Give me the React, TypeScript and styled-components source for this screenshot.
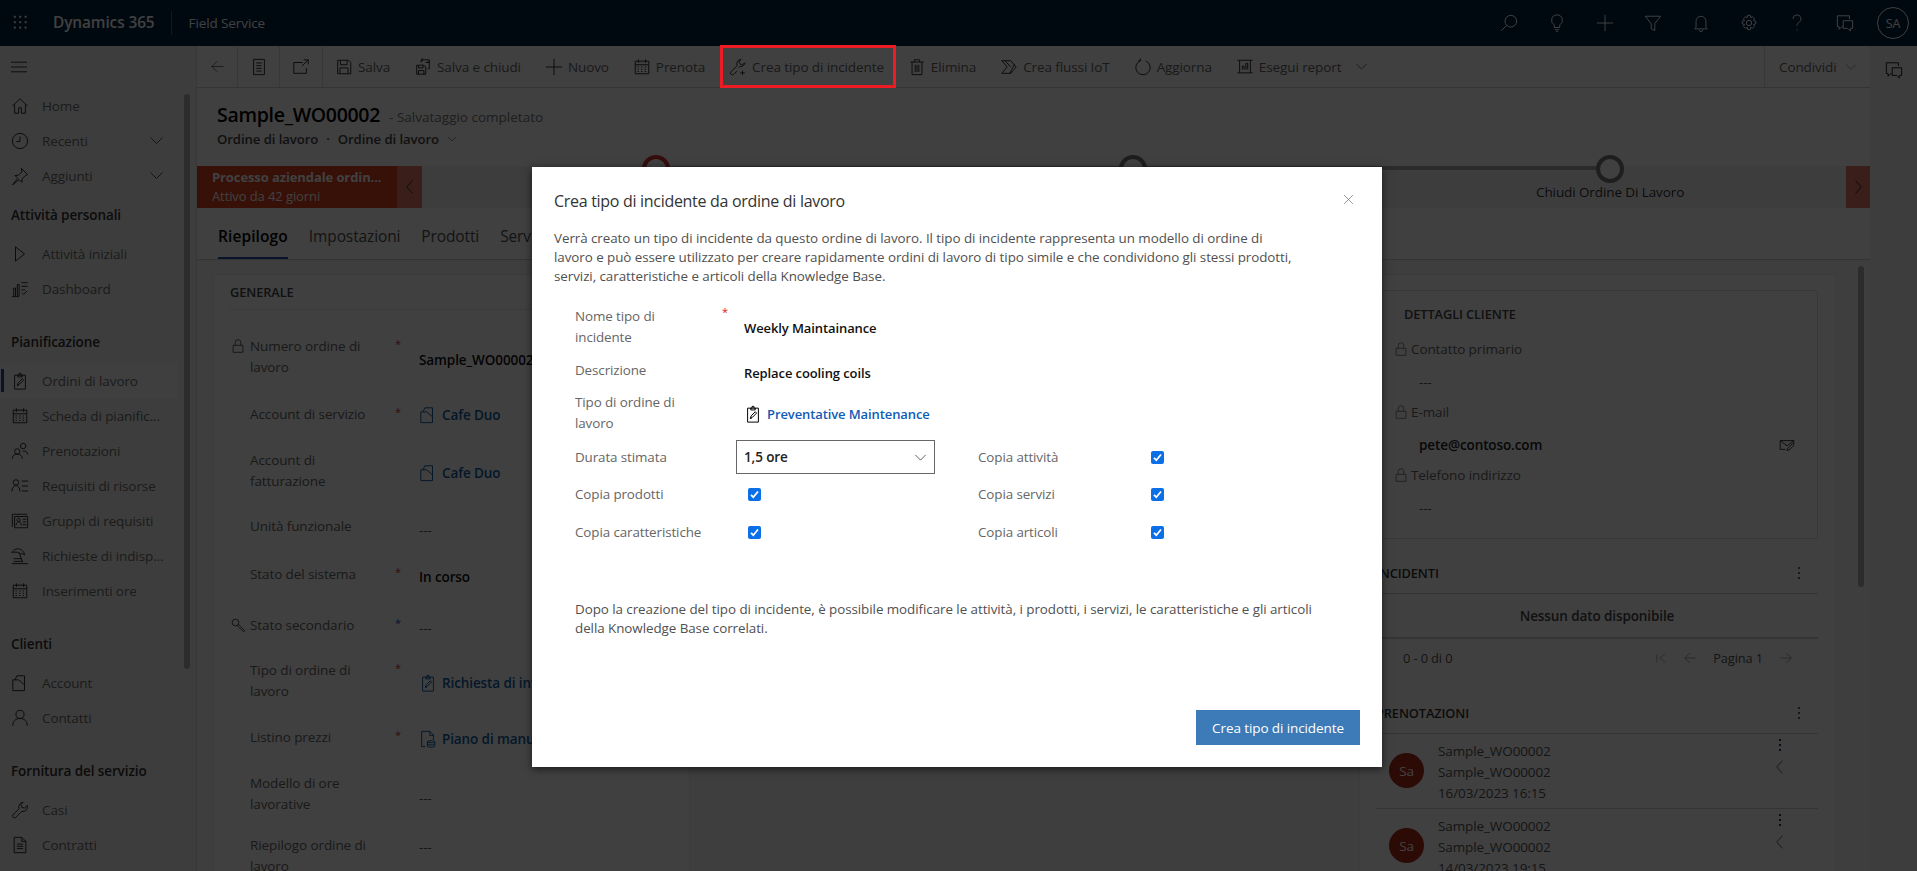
import React from 'react';
import styled, { createGlobalStyle } from 'styled-components';

const FONT = '"Open Sans", "Noto Sans", sans-serif';

const GlobalStyle = createGlobalStyle`
  html, body { margin: 0; padding: 0; height: 100%; overflow: hidden; background: #fff; }
  body { font-family: ${FONT}; font-size: 13.5px; letter-spacing: -0.1px; color: #323130; }
  * { box-sizing: border-box; }
`;

/* --- icons, thin outlines on a 20 unit grid --- */
const icons: Record<string, React.ReactNode> = {
  waffle: <g fill="currentColor" stroke="none">{[3, 9, 15].flatMap(y => [3, 9, 15].map(x => <rect key={`${x}-${y}`} x={x - 1} y={y - 1} width="2.2" height="2.2" />))}</g>,
  menu: <path d="M0 4h20M0 10h20M0 16h20" />,
  back: <path d="M18 10H2.5M9.5 3l-7 7 7 7" />,
  docList: <path d="M4 1.5h12v17H4zM7 5.5h6M7 8.5h6M7 11.5h6M7 14.5h6" />,
  openIn: <path d="M12 5H2v12h14v-6M11 9l7-7M13 2h5v5" />,
  save: <path d="M3 2.5h12l2.5 2.5v12.5h-14.5zM6 2.5v5h7.500v-5M5.500 17.500v-6.500h9v6.500" />,
  saveClose: <path d="M3 8h8l2 2v8H3zM5 8v3h5V8M5 18v-4h6v4M8 5V2h9v10h-2M8 2l2-1.500M8 2l2 1.500M17 5l-2-1.500M13 5h4" />,
  plus: <path d="M10 1v18M1 10h18" />,
  calendar: <path d="M2.500 3.500h15v14h-15zM2.500 7.500h15M6 1.500v4M14 1.500v4M5 10h1.500M9 10h1.500M13 10h1.500M5 12.500h1.500M9 12.500h1.500M13 12.500h1.500M5 15h1.500M9 15h1.500M13 15h1.500" />,
  wrenchPlus: <path d="M13.500 1.500a5 5 0 0 0-4.500 7L2 15.500a2.200 2.200 0 0 0 3 3l4-4M13 1.700l-2 3 2.500 3 3.500-1.500M17.800 5a5 5 0 0 1-5.800 4.500L10.500 11M15 14v5M12.500 16.500h5" />,
  trash: <path d="M2.500 4.500h15M7 4.500V2h6v2.500M4.500 4.500V18.500h11V4.500M8 7.500v8M10 7.500v8M12 7.500v8" />,
  flow: <path d="M2 3h10l6 7-6 7H2l6-7zM6 3.500l6 6.500M11 17l5-10" />,
  refresh: <path d="M7 3.200a8 8 0 1 0 6 0M7 3.200V.5M7 3.200H4.500" />,
  report: <path d="M4 2.500h12v14H4zM1.500 2.500H4M16 2.500h2.500M1.500 16.500H4M16 16.500h2.500M7 13V9h2v4M11 13V6h2v7" />,
  chevronDown: <path d="M2 6l8 8 8-8" />,
  chevronLeft: <path d="M13 2l-7 8 7 8" />,
  chevronRight: <path d="M7 2l7 8-7 8" />,
  search: <path d="M12 1.500a6.500 6.500 0 1 1 0 13 6.500 6.500 0 0 1 0-13zM7.500 12.500L1.500 18.500" />,
  bulb: <path d="M10 1a6 6 0 0 0-3 11.200V15h6v-2.800A6 6 0 0 0 10 1zM7.500 17.500h5M9 19.500h2" />,
  filter: <path d="M1.500 2.500h17L12 10.500v8l-4-2v-5.500z" />,
  bell: <path d="M4.500 15V8a5.500 5.500 0 0 1 11 0v7l1.500 1.500H3zM8 17.500a2 2 0 0 0 4 0" />,
  gear: <path d="M8.500 1.500h3l.5 2.500 2-.9 2.200 2.100-1.200 2.100 2.500.7v3l-2.500.6 1.200 2.200-2.200 2.100-2-1.100-.5 2.600h-3l-.5-2.600-2 1.100-2.200-2.100 1.200-2.200-2.500-.6v-3l2.500-.7-1.200-2.100 2.200-2.100 2 .9zM10 7a3 3 0 1 1 0 6 3 3 0 0 1 0-6z" />,
  question: <path d="M5.500 5.500a4.500 4.500 0 1 1 6.500 4c-1.500.8-2 1.500-2 3.500M10 17v1.500" />,
  chat: <path d="M15 5.500V2H1.500v12h2v3l3-3h1M8 7.500h10.500V16h-2.500v3l-3-3H8z" />,
  home: <path d="M1.500 10L10 2l8.500 8M4 8v10h4.500v-6h3v6H16V8" />,
  clock: <path d="M10 1.500a8.500 8.500 0 1 1 0 17 8.500 8.500 0 0 1 0-17zM10 5v5.500h-4" />,
  pin: <path d="M11.500 1.500l7 7-2.500 1-3.500 3.500-.5 4-3-3-7.500 6 6-7.500-3-3 4-.5L12 5.500z" />,
  play: <path d="M5 2l10 8-10 8z" />,
  dashboard: <path d="M1 18.500h8M3 18V9h2v9M7 18V5h2v13M11.500 3h7M11.500 7h7M11.500 11h4M12 14l2 2 4-4" />,
  clipboard: <path d="M4 3.500h12v15.500H4zM7.500 3.500V5.500h5V3.500H11V1.500H9v2zM7 15l1-3 4.500-4.500 1.500 1.500-4.500 4.500zM7 15l1.500-.5" />,
  people: <path d="M13.500 1.500a3 3 0 1 1 0 6 3 3 0 0 1 0-6zM7 7.500a3 3 0 1 1 0 6 3 3 0 0 1 0-6zM1.500 18.500c0-3 2-5 5.500-5s5.500 2 5.500 5M13 10c3-.5 5.500 1.500 5.500 4" />,
  reqList: <path d="M5.500 3a3 3 0 1 1 0 6 3 3 0 0 1 0-6zM1 16c0-4 2-6.500 4.500-6.500S10 12 10 16M12 4.500h7M12 10h7M12 15.500h7" />,
  group: <path d="M1.500 2.500v14M1.500 2.500H18M4 5h14.500v12.500H4zM8.500 7a1.800 1.800 0 1 1 0 3.600 1.800 1.800 0 0 1 0-3.600zM5.500 15c0-2.500 1.300-4 3-4s3 1.500 3 4M13 8h4M13 11h4M13 14h4" />,
  beach: <path d="M1 6c2-4 7-5 10-3 2 1 4 3 4 6-2-2-4-2-5-1-1-2-4-3-9-2zM9 6l4 11M1 18.500h18M3 13h9M3 16h10" />,
  building: <path d="M2 6.500V18.500h13V12L8.500 6.500zM4.500 6.500L6.500 2H15V12" />,
  person: <path d="M10 1.500a4.500 4.500 0 1 1 0 9 4.500 4.500 0 0 1 0-9zM2 18.500c0-5 3-8 8-8s8 3 8 8" />,
  wrench: <path d="M13.500 1.500a5 5 0 0 0-4.500 7L2 15.500a2.200 2.200 0 0 0 3 3l7-7a5 5 0 0 0 6-6.500l-3 3-3-1-1-3z" />,
  contract: <path d="M3.500 1.500H12l4.500 4.500V18.500H3.500zM12 1.500V6h4.500M6.500 9h7M6.500 11.500h7M6.500 14h7" />,
  lock: <path d="M3 9h14v10H3zM6 9V5a4 4 0 0 1 8 0v4" />,
  keySearch: <path d="M6 1.500a4.500 4.500 0 1 1 0 9 4.500 4.500 0 0 1 0-9zM9.500 8l9 9-1.500 1.500L8 10" />,
  priceList: <path d="M3 1.500h9l4 4V11M12 1.500V6h4M7 18.500H3v-17M9.500 13c0-1.500 8-1.500 8 0v5c0 1.500-8 1.500-8 0zM9.500 15.500c0 1.500 8 1.500 8 0M9.500 13c0 1.500 8 1.500 8 0" />,
  mailEdit: <path d="M1.500 4.500h17v4M1.500 4.500v11H8M1.500 4.500L10 11l8.500-6.500M10 17l1-3 6-6 2 2-6 6z" />,
  first: <path d="M3 3v14M17 3l-9 7 9 7" />,
  forward: <path d="M2 10h15.500M10.500 3l7 7-7 7" />,
  close: <path d="M2 2l16 16M18 2L2 18" />,
};

const Svg = styled.svg<{ $size: number; $color?: string }>`
  width: ${p => p.$size}px;
  height: ${p => p.$size}px;
  flex: none;
  fill: none;
  stroke: currentColor;
  stroke-width: 1.1;
  color: ${p => p.$color || 'inherit'};
`;

const Icon = ({ name, size = 18, color }: { name: string; size?: number; color?: string }) => (
  <Svg viewBox="0 0 20 20" $size={size} $color={color}>{icons[name]}</Svg>
);

/* --- shell --- */
const Page = styled.div`
  width: 1917px;
  height: 871px;
  overflow: hidden;
  display: flex;
  flex-direction: column;
`;

const TopBar = styled.header`
  height: 46px;
  flex: none;
  background: #002040;
  color: #fff;
  display: flex;
  align-items: center;
`;

const Waffle = styled.div`
  width: 42px;
  margin-right: 11px;
  display: flex;
  justify-content: center;
`;

const Brand = styled.span`
  font-size: 15.4px;
  font-weight: 600;
  padding-right: 16px;
  border-right: 1px solid #4a6480;
  line-height: 24px;
`;

const AppName = styled.span`
  margin-left: 17px;
  font-size: 13.5px;
`;

const TopIcons = styled.div`
  margin-left: auto;
  display: flex;
  align-items: center;
  gap: 30px;
  padding-right: 8px;
`;

const Avatar = styled.div`
  width: 32px;
  height: 32px;
  border-radius: 50%;
  border: 1px solid #fff;
  display: flex;
  align-items: center;
  justify-content: center;
  font-size: 12.5px;
  margin-left: -7px;
`;

const Body = styled.div`
  flex: 1;
  min-height: 0;
  display: flex;
`;

/* --- sidebar --- */
const Sidebar = styled.nav`
  width: 197px;
  flex: none;
  background: #f3f2f1;
  border-right: 1px solid #e1dfdd;
  position: relative;
`;

const MenuRow = styled.div`
  height: 42px;
  padding-left: 11px;
  display: flex;
  align-items: center;
  color: #201f1e;
`;

const ScrollThumb = styled.div<{ $left: number; $top: number; $height: number }>`
  position: absolute;
  left: ${p => p.$left}px;
  top: ${p => p.$top}px;
  width: 6px;
  height: ${p => p.$height}px;
  border-radius: 3px;
  background: #b0b0b0;
`;

const SectionTitle = styled.div<{ $first?: boolean }>`
  height: 43px;
  margin-top: ${p => (p.$first ? 0 : 14)}px;
  padding-left: 11px;
  display: flex;
  align-items: center;
  font-weight: 600;
  color: #323130;
`;

const NavItem = styled.div<{ $active?: boolean }>`
  height: 35px;
  width: 178px;
  position: relative;
  display: flex;
  align-items: center;
  padding-left: 11px;
  gap: 13px;
  color: #6e6e6e;
  background: ${p => (p.$active ? '#fafafa' : 'transparent')};

  &::before {
    content: '';
    display: ${p => (p.$active ? 'block' : 'none')};
    position: absolute;
    left: 1px;
    top: 6px;
    bottom: 6px;
    width: 3px;
    background: #1f4fa3;
  }

  svg { color: #323130; }
`;

const NavLabel = styled.span`
  flex: 1;
`;

const NavChevron = styled.span`
  margin-right: 14px;
  display: flex;
`;

/* --- main --- */
const Main = styled.main`
  flex: 1;
  min-width: 0;
  background: #fff;
  display: flex;
  flex-direction: column;
  position: relative;
`;

const CommandBar = styled.div`
  height: 42px;
  flex: none;
  display: flex;
  border-bottom: 1px solid #d2d0ce;
  color: #666;
`;

const IconCell = styled.div<{ $w: number }>`
  width: ${p => p.$w}px;
  display: flex;
  align-items: center;
  justify-content: center;
  border-right: 1px solid #e1dfdd;
  color: #323130;
`;

const Cmd = styled.div`
  display: flex;
  align-items: center;
  padding: 0 12px;
  gap: 5px;
  white-space: nowrap;
  svg { color: #323130; }
`;

const MoreChevron = styled.div`
  display: flex;
  align-items: center;
  margin-left: 2px;
  color: #323130;
`;

const ShareCell = styled.div`
  margin-left: auto;
  width: 106px;
  padding-left: 14px;
  display: flex;
  align-items: center;
  gap: 8px;
  border-left: 1px solid #e1dfdd;
`;

const FormHead = styled.div`
  height: 78px;
  flex: none;
  padding: 14px 20px 0;
  background: #fff;
`;

const TitleRow = styled.div`
  display: flex;
  align-items: baseline;
  gap: 9px;
`;

const RecordName = styled.span`
  font-size: 19.5px;
  font-weight: 600;
  line-height: 26px;
  color: #000;
  letter-spacing: -0.3px;
`;

const SaveState = styled.span`
  color: #777;
  letter-spacing: 0;
`;

const Crumb = styled.div`
  margin-top: 2px;
  line-height: 18px;
  display: flex;
  align-items: center;
  gap: 8px;
  font-size: 13.2px;
  font-weight: 600;
  color: #444;
`;

const ProcessBar = styled.div`
  height: 42px;
  flex: none;
  background: #f4f4f4;
  display: flex;
  position: relative;
`;

const ProcessStage = styled.div`
  width: 200px;
  background: #d9401e;
  color: #fff;
  padding: 2px 0 0 15px;
  line-height: 19px;
  font-size: 13px;
`;

const ProcessName = styled.div`
  font-weight: 700;
  white-space: nowrap;
`;

const ProcessArrow = styled.div`
  width: 25px;
  background: #e8786a;
  display: flex;
  align-items: center;
  justify-content: center;
  color: #201f1e;
`;

const ProcessLine = styled.div`
  position: absolute;
  left: 459px;
  right: 260px;
  top: 0;
  height: 4px;
  background: #aaa;
`;

const ProcessNode = styled.div<{ $left: number; $color: string }>`
  position: absolute;
  left: ${p => p.$left - 14}px;
  top: -11px;
  width: 28px;
  height: 28px;
  border-radius: 50%;
  border: 4px solid ${p => p.$color};
  background: #fff;
`;

const ProcessLabel = styled.div`
  position: absolute;
  left: 1339px;
  top: 17px;
  color: #333;
  white-space: nowrap;
`;

const ProcessEnd = styled.div`
  margin-left: auto;
  width: 24px;
  background: #e8786a;
  display: flex;
  align-items: center;
  justify-content: center;
  color: #201f1e;
`;

const Tabs = styled.div`
  height: 52px;
  flex: none;
  display: flex;
  gap: 21px;
  padding: 15px 0 0 21px;
  border-bottom: 1px solid #d2d0ce;
  font-size: 15.5px;
  color: #505050;
`;

const Tab = styled.div<{ $active?: boolean }>`
  height: 36px;
  line-height: 26px;
  color: ${p => (p.$active ? '#000' : '#505050')};
  border-bottom: ${p => (p.$active ? '2.5px solid #1f4fa3' : 'none')};
  font-weight: ${p => (p.$active ? 600 : 400)};
  letter-spacing: ${p => (p.$active ? '0.1px' : '-0.12px')};
`;

const FormGrid = styled.div`
  flex: 1;
  min-height: 0;
  background: #f8f8f8;
  padding: 14px 34px 0 16px;
  display: grid;
  grid-template-columns: 477px 669px 477px;
  position: relative;
`;

const Card = styled.section`
  background: #fff;
  border: 1px solid #eee;
  border-radius: 2px 2px 0 0;
`;

const CardTitle = styled.div`
  margin: 0 16px;
  height: 35px;
  line-height: 35px;
  border-bottom: 1px solid #e8e8e8;
  color: #444;
  font-weight: 600;
  font-size: 12.8px;
`;

const FormRows = styled.div`
  padding: 26px 0 0 19px;
`;

const Row = styled.div<{ $h: number }>`
  display: grid;
  grid-template-columns: 17px 143px 26px 1fr;
  height: ${p => p.$h}px;
  align-items: start;
`;

const RowIcon = styled.span`
  display: flex;
  margin-left: -2px;
  padding-top: 3px;
  color: #323130;
`;

const RowLabel = styled.span`
  color: #666;
  line-height: 21px;
`;

const Required = styled.span<{ $color?: string }>`
  color: ${p => p.$color || '#d13438'};
  font-size: 11px;
  padding-left: 2px;
  line-height: 15px;
`;

/* $at is the offset of the value's middle from the top of its row */
const RowValue = styled.span<{ $strong?: boolean; $link?: boolean; $at: number }>`
  display: flex;
  align-items: center;
  gap: 5px;
  height: 20px;
  margin-top: ${p => p.$at - 10}px;
  white-space: nowrap;
  overflow: hidden;
  font-weight: ${p => (p.$strong || p.$link ? 600 : 400)};
  color: ${p => (p.$link ? '#115ea3' : p.$strong ? '#111' : '#555')};
  svg { color: ${p => (p.$link ? '#115ea3' : '#000')}; }
`;

const SideColumn = styled.div`
  background: #fff;
  border: 1px solid #eee;
  padding: 15px 17px 0 16px;
`;

const DetailsCard = styled.div`
  height: 249px;
  border: 1px solid #e1dfdd;
  border-radius: 2px;
  padding: 11px 0 0 17px;
`;

const DetailsTitle = styled.div`
  font-weight: 600;
  font-size: 12.8px;
  color: #444;
  height: 24px;
  line-height: 24px;
  padding-left: 10px;
`;

const DetailLabel = styled.div<{ $top?: number }>`
  margin-top: ${p => p.$top ?? 8}px;
  display: flex;
  align-items: center;
  gap: 3px;
  color: #666;
  height: 22px;
`;

const DetailValue = styled.div<{ $strong?: boolean }>`
  margin-top: 11px;
  margin-left: 25px;
  height: 22px;
  display: flex;
  align-items: center;
  justify-content: space-between;
  padding-right: 22px;
  font-weight: ${p => (p.$strong ? 600 : 400)};
  color: ${p => (p.$strong ? '#222' : '#555')};
`;

const GroupHead = styled.div<{ $top: number }>`
  margin-top: ${p => p.$top}px;
  height: 37px;
  display: flex;
  align-items: center;
  justify-content: space-between;
  padding: 0 18px 5px 0;
  border-bottom: 1px solid #d2d0ce;
  font-weight: 600;
  font-size: 12.8px;
  color: #333;
`;

const Dots = styled.span<{ $dark?: boolean }>`
  display: flex;
  flex-direction: column;
  gap: 3px;
  i {
    display: block;
    width: 2px;
    height: 2px;
    background: ${p => (p.$dark ? '#1d3b6b' : '#666')};
  }
`;

const ThreeDots = ({ dark }: { dark?: boolean }) => (
  <Dots $dark={dark}><i /><i /><i /></Dots>
);

const Empty = styled.div`
  height: 45px;
  display: flex;
  align-items: center;
  justify-content: center;
  border-bottom: 2px solid #d2d0ce;
  font-weight: 600;
  color: #444;
`;

const Pager = styled.div`
  height: 38px;
  display: flex;
  align-items: center;
  padding: 0 25px 0 27px;
  font-size: 12.8px;
  color: #555;
`;

const PagerNav = styled.div`
  margin-left: auto;
  display: flex;
  align-items: center;
  gap: 16px;
  color: #8a8a8a;
`;

const PagerText = styled.span`
  color: #555;
`;

const BookingRow = styled.div`
  height: 75px;
  display: flex;
  border-bottom: 1px solid #d2d0ce;
  padding-left: 13px;
`;

const Initials = styled.div`
  width: 35px;
  height: 35px;
  margin-top: 19px;
  border-radius: 50%;
  background: #b0281a;
  color: #fff;
  display: flex;
  align-items: center;
  justify-content: center;
  flex: none;
`;

const BookingText = styled.div`
  margin-left: 14px;
  padding-top: 7px;
  line-height: 21px;
  color: #555;
`;

const BookingTools = styled.div`
  margin-left: auto;
  margin-right: 30px;
  padding-top: 5px;
  display: flex;
  flex-direction: column;
  align-items: center;
  gap: 8px;
  color: #555;
`;

const RightRail = styled.aside`
  width: 47px;
  flex: none;
  background: #f3f2f1;
  display: flex;
  justify-content: center;
  padding-top: 15px;
  color: #201f1e;
`;

/* --- dim layer, dialog, callout --- */
const Dim = styled.div`
  position: absolute;
  inset: 0;
  background: rgba(0, 0, 0, 0.75);
`;

const Callout = styled.div`
  position: absolute;
  left: 720px;
  top: 45px;
  width: 176px;
  height: 43px;
  border: 3px solid #ed1c24;
`;

const Dialog = styled.div`
  position: absolute;
  left: 532px;
  top: 167px;
  width: 850px;
  height: 600px;
  background: #fff;
  box-shadow: 0 2px 8px rgba(0, 0, 0, 0.6);
  display: flex;
  flex-direction: column;
  padding: 20px 22px 22px;
  color: #505050;
`;

const DialogHead = styled.div`
  display: flex;
  align-items: center;
  justify-content: space-between;
  height: 28px;
`;

const DialogTitle = styled.div`
  font-size: 16px;
  color: #333;
  letter-spacing: -0.3px;
`;

const CloseBtn = styled.div`
  display: flex;
  margin: 0 6px 4px 0;
  color: #555;
`;

const Intro = styled.p`
  margin: 13.5px 0 0;
  font-size: 13.4px;
  line-height: 19px;
  white-space: nowrap;
  letter-spacing: -0.06px;
`;

const Fields = styled.div`
  margin: 20px 0 0 21px;
  display: grid;
  grid-template-columns: 161px 199px 43px 172.5px 1fr;
`;

const FieldLabel = styled.div<{ $col?: number; $top?: number; $center?: boolean }>`
  grid-column: ${p => p.$col ?? 1};
  margin-top: ${p => p.$top ?? 0}px;
  align-self: ${p => (p.$center ? 'center' : 'start')};
  position: relative;
  line-height: 21px;
  color: #666;
  font-size: 13.4px;
`;

const Star = styled.span`
  position: absolute;
  left: 147px;
  top: 0;
  color: #e81123;
  font-size: 11px;
  line-height: 12px;
`;

/* $at is the offset of the value's middle from the top of its grid row */
const FieldValue = styled.div<{ $link?: boolean; $at: number }>`
  grid-column: 2 / span 4;
  height: 14px;
  margin-top: ${p => p.$at - 7}px;
  padding-left: 8px;
  align-self: start;
  display: flex;
  align-items: center;
  gap: 5px;
  font-weight: 600;
  font-size: 13px;
  color: ${p => (p.$link ? '#0f5bb5' : '#111')};
  svg { color: #000; }
`;

const SelectBox = styled.div<{ $top: number }>`
  grid-column: 2;
  margin-top: ${p => p.$top}px;
  height: 34px;
  border: 1px solid #666;
  display: flex;
  align-items: center;
  justify-content: space-between;
  padding: 0 7px;
  font-weight: 600;
  color: #222;
`;

const Check = styled.span<{ $col: number; $top: number }>`
  grid-column: ${p => p.$col};
  width: 13px;
  height: 13px;
  margin-top: ${p => p.$top}px;
  margin-left: ${p => (p.$col === 2 ? 12 : 0)}px;
  border-radius: 2px;
  background: #0b6fe8;
  align-self: center;
  justify-self: start;
  display: flex;
  align-items: center;
  justify-content: center;
  color: #fff;
`;

const Note = styled.p`
  margin: auto 0 0 21px;
  font-size: 13.4px;
  line-height: 18.5px;
  white-space: nowrap;
  letter-spacing: -0.06px;
`;

const PrimaryBtn = styled.div`
  align-self: flex-end;
  width: 164px;
  height: 35px;
  margin: 73px 0 0;
  background: #3d7ab8;
  color: #fff;
  display: flex;
  align-items: center;
  justify-content: center;
`;

/* --- data --- */
const commands: [string, string, string?][] = [
  ['save', 'Salva'],
  ['saveClose', 'Salva e chiudi'],
  ['plus', 'Nuovo', '#107c10'],
  ['calendar', 'Prenota'],
  ['wrenchPlus', 'Crea tipo di incidente'],
  ['trash', 'Elimina'],
  ['flow', 'Crea flussi IoT'],
  ['refresh', 'Aggiorna'],
  ['report', 'Esegui report'],
];

const navSections: { title?: string; items: [string, string, boolean?][] }[] = [
  { items: [['home', 'Home'], ['clock', 'Recenti', true], ['pin', 'Aggiunti', true]] },
  { title: 'Attività personali', items: [['play', 'Attività iniziali'], ['dashboard', 'Dashboard']] },
  {
    title: 'Pianificazione',
    items: [
      ['clipboard', 'Ordini di lavoro'],
      ['calendar', 'Scheda di pianific...'],
      ['people', 'Prenotazioni'],
      ['reqList', 'Requisiti di risorse'],
      ['group', 'Gruppi di requisiti'],
      ['beach', 'Richieste di indisp...'],
      ['calendar', 'Inserimenti ore'],
    ],
  },
  { title: 'Clienti', items: [['building', 'Account'], ['person', 'Contatti']] },
  { title: 'Fornitura del servizio', items: [['wrench', 'Casi'], ['contract', 'Contratti']] },
];

const topIcons = ['search', 'bulb', 'plus', 'filter', 'bell', 'gear', 'question', 'chat'];

const tick = (
  <svg width="11" height="11" viewBox="0 0 11 11" fill="none" stroke="currentColor" strokeWidth="1.8">
    <path d="M2 5.800l2.300 2.400L9 2.500" />
  </svg>
);

const Booking = ({ date }: { date: string }) => (
  <BookingRow>
    <Initials>Sa</Initials>
    <BookingText>
      <div>Sample_WO00002</div>
      <div>Sample_WO00002</div>
      <div>{date}</div>
    </BookingText>
    <BookingTools>
      <ThreeDots dark />
      <Icon name="chevronLeft" size={16} />
    </BookingTools>
  </BookingRow>
);

export default function App() {
  return (
    <Page>
      <GlobalStyle />
      <TopBar>
        <Waffle><Icon name="waffle" size={18} /></Waffle>
        <Brand>Dynamics 365</Brand>
        <AppName>Field Service</AppName>
        <TopIcons>
          {topIcons.map(n => <Icon key={n} name={n} />)}
          <Avatar>SA</Avatar>
        </TopIcons>
      </TopBar>

      <Body>
        <Sidebar>
          <MenuRow><Icon name="menu" size={16} /></MenuRow>
          <ScrollThumb $left={184} $top={48} $height={575} />
          {navSections.map((sec, i) => (
            <div key={i}>
              {sec.title && <SectionTitle $first={i === 1}>{sec.title}</SectionTitle>}
              {sec.items.map(([icon, label, more]) => (
                <NavItem key={label} $active={label === 'Ordini di lavoro'}>
                  <Icon name={icon} />
                  <NavLabel>{label}</NavLabel>
                  {more && <NavChevron><Icon name="chevronDown" size={15} /></NavChevron>}
                </NavItem>
              ))}
            </div>
          ))}
        </Sidebar>

        <Main>
          <CommandBar>
            <IconCell $w={41}><Icon name="back" size={15} color="#555" /></IconCell>
            <IconCell $w={42}><Icon name="docList" /></IconCell>
            <IconCell $w={43}><Icon name="openIn" /></IconCell>
            {commands.map(([icon, label, color]) => (
              <Cmd key={label}>
                <Icon name={icon} color={color} />
                {label}
              </Cmd>
            ))}
            <MoreChevron><Icon name="chevronDown" size={13} /></MoreChevron>
            <ShareCell>Condividi <Icon name="chevronDown" size={12} /></ShareCell>
          </CommandBar>

          <FormHead>
            <TitleRow>
              <RecordName>Sample_WO00002</RecordName>
              <SaveState>- Salvataggio completato</SaveState>
            </TitleRow>
            <Crumb>
              Ordine di lavoro <span>·</span> Ordine di lavoro
              <Icon name="chevronDown" size={10} />
            </Crumb>
          </FormHead>

          <ProcessBar>
            <ProcessStage>
              <ProcessName>Processo aziendale ordin...</ProcessName>
              <div>Attivo da 42 giorni</div>
            </ProcessStage>
            <ProcessArrow><Icon name="chevronLeft" size={16} /></ProcessArrow>
            <ProcessLine />
            <ProcessNode $left={459} $color="#d13438" />
            <ProcessNode $left={936} $color="#777" />
            <ProcessNode $left={1413} $color="#777" />
            <ProcessLabel>Chiudi Ordine Di Lavoro</ProcessLabel>
            <ProcessEnd><Icon name="chevronRight" size={16} /></ProcessEnd>
          </ProcessBar>

          <Tabs>
            <Tab $active>Riepilogo</Tab>
            <Tab>Impostazioni</Tab>
            <Tab>Prodotti</Tab>
            <Tab>Servizi</Tab>
          </Tabs>

          <FormGrid>
            <Card>
              <CardTitle>GENERALE</CardTitle>
              <FormRows>
                <Row $h={68}>
                  <RowIcon><Icon name="lock" size={14} /></RowIcon>
                  <RowLabel>Numero ordine di<br />lavoro</RowLabel>
                  <Required>*</Required>
                  <RowValue $strong $at={23.5}>Sample_WO00002</RowValue>
                </Row>
                <Row $h={46}>
                  <span />
                  <RowLabel>Account di servizio</RowLabel>
                  <Required>*</Required>
                  <RowValue $link $at={11}><Icon name="building" />Cafe Duo</RowValue>
                </Row>
                <Row $h={66}>
                  <span />
                  <RowLabel>Account di<br />fatturazione</RowLabel>
                  <span />
                  <RowValue $link $at={22.5}><Icon name="building" />Cafe Duo</RowValue>
                </Row>
                <Row $h={48}>
                  <span />
                  <RowLabel>Unità funzionale</RowLabel>
                  <span />
                  <RowValue $at={13.5}>---</RowValue>
                </Row>
                <Row $h={51}>
                  <span />
                  <RowLabel>Stato del sistema</RowLabel>
                  <Required>*</Required>
                  <RowValue $strong $at={12.5}>In corso</RowValue>
                </Row>
                <Row $h={45}>
                  <RowIcon><Icon name="keySearch" size={15} /></RowIcon>
                  <RowLabel>Stato secondario</RowLabel>
                  <Required $color="#2b4fbf">*</Required>
                  <RowValue $at={12.5}>---</RowValue>
                </Row>
                <Row $h={67}>
                  <span />
                  <RowLabel>Tipo di ordine di<br />lavoro</RowLabel>
                  <Required>*</Required>
                  <RowValue $link $at={22.5}><Icon name="clipboard" />Richiesta di intervento</RowValue>
                </Row>
                <Row $h={46}>
                  <span />
                  <RowLabel>Listino prezzi</RowLabel>
                  <Required>*</Required>
                  <RowValue $link $at={11.5}><Icon name="priceList" />Piano di manutenzione</RowValue>
                </Row>
                <Row $h={62}>
                  <span />
                  <RowLabel>Modello di ore<br />lavorative</RowLabel>
                  <span />
                  <RowValue $at={24.5}>---</RowValue>
                </Row>
                <Row $h={44}>
                  <span />
                  <RowLabel>Riepilogo ordine di<br />lavoro</RowLabel>
                  <span />
                  <RowValue $at={11.5}>---</RowValue>
                </Row>
              </FormRows>
            </Card>
            <div />
            <SideColumn>
              <DetailsCard>
                <DetailsTitle>DETTAGLI CLIENTE</DetailsTitle>
                <DetailLabel $top={12}><Icon name="lock" size={14} />Contatto primario</DetailLabel>
                <DetailValue>---</DetailValue>
                <DetailLabel><Icon name="lock" size={14} />E-mail</DetailLabel>
                <DetailValue $strong>pete@contoso.com<Icon name="mailEdit" size={16} /></DetailValue>
                <DetailLabel><Icon name="lock" size={14} />Telefono indirizzo</DetailLabel>
                <DetailValue>---</DetailValue>
              </DetailsCard>
              <GroupHead $top={18}>INCIDENTI<ThreeDots /></GroupHead>
              <Empty>Nessun dato disponibile</Empty>
              <Pager>
                0 - 0 di 0
                <PagerNav>
                  <Icon name="first" size={12} />
                  <Icon name="back" size={14} />
                  <PagerText>Pagina 1</PagerText>
                  <Icon name="forward" size={14} />
                </PagerNav>
              </Pager>
              <GroupHead $top={20}>PRENOTAZIONI<ThreeDots /></GroupHead>
              <Booking date="16/03/2023 16:15" />
              <Booking date="14/03/2023 19:15" />
            </SideColumn>
            <ScrollThumb $left={1661} $top={6} $height={321} />
          </FormGrid>
        </Main>

        <RightRail><Icon name="chat" /></RightRail>
      </Body>

      <Dim />
      <Callout />

      <Dialog>
        <DialogHead>
          <DialogTitle>Crea tipo di incidente da ordine di lavoro</DialogTitle>
          <CloseBtn><Icon name="close" size={11} /></CloseBtn>
        </DialogHead>
        <Intro>
          Verrà creato un tipo di incidente da questo ordine di lavoro. Il tipo di incidente rappresenta un modello di ordine di<br />
          lavoro e può essere utilizzato per creare rapidamente ordini di lavoro di tipo simile e che condividono gli stessi prodotti,<br />
          servizi, caratteristiche e articoli della Knowledge Base.
        </Intro>
        <Fields>
          <FieldLabel>Nome tipo di<br />incidente<Star>*</Star></FieldLabel>
          <FieldValue $at={22.5}>Weekly Maintainance</FieldValue>

          <FieldLabel $top={12}>Descrizione</FieldLabel>
          <FieldValue $at={25.5}>Replace cooling coils</FieldValue>

          <FieldLabel $top={11}>Tipo di ordine di<br />lavoro</FieldLabel>
          <FieldValue $link $at={33.5}><Icon name="clipboard" />Preventative Maintenance</FieldValue>

          <FieldLabel $top={6.5} $center>Durata stimata</FieldLabel>
          <SelectBox $top={6.5}>1,5 ore<Icon name="chevronDown" size={13} /></SelectBox>
          <FieldLabel $col={4} $top={6.5} $center>Copia attività</FieldLabel>
          <Check $col={5} $top={6.5}>{tick}</Check>

          <FieldLabel $top={9.5}>Copia prodotti</FieldLabel>
          <Check $col={2} $top={9.5}>{tick}</Check>
          <FieldLabel $col={4} $top={9.5}>Copia servizi</FieldLabel>
          <Check $col={5} $top={9.5}>{tick}</Check>

          <FieldLabel $top={17}>Copia caratteristiche</FieldLabel>
          <Check $col={2} $top={17}>{tick}</Check>
          <FieldLabel $col={4} $top={17}>Copia articoli</FieldLabel>
          <Check $col={5} $top={17}>{tick}</Check>
        </Fields>
        <Note>
          Dopo la creazione del tipo di incidente, è possibile modificare le attività, i prodotti, i servizi, le caratteristiche e gli articoli<br />
          della Knowledge Base correlati.
        </Note>
        <PrimaryBtn>Crea tipo di incidente</PrimaryBtn>
      </Dialog>
    </Page>
  );
}
